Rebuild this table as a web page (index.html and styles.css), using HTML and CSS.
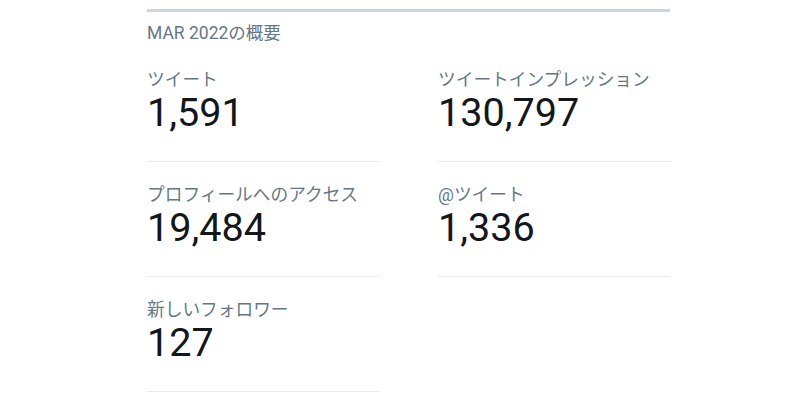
FILE: index.html
```html
<!DOCTYPE html>
<html lang="ja">
<head>
<meta charset="utf-8">
<title>Summary</title>
<link rel="stylesheet" href="styles.css">
</head>
<body>
<main class="summary">
  <div class="topbar"></div>
  <h2 class="period">MAR 2022の概要</h2>
  <div class="grid">
    <div class="stat">
      <div class="label">ツイート</div>
      <div class="value">1,591</div>
    </div>
    <div class="stat">
      <div class="label">ツイートインプレッション</div>
      <div class="value">130,797</div>
    </div>
    <div class="stat">
      <div class="label">プロフィールへのアクセス</div>
      <div class="value">19,484</div>
    </div>
    <div class="stat">
      <div class="label">@ツイート</div>
      <div class="value">1,336</div>
    </div>
    <div class="stat">
      <div class="label">新しいフォロワー</div>
      <div class="value">127</div>
    </div>
  </div>
</main>
</body>
</html>
```
FILE: styles.css
```css
html, body {
  margin: 0;
  padding: 0;
  background: #ffffff;
}
body {
  font-family: Roboto, "Noto Sans CJK JP", sans-serif;
  color: #14171a;
}
.summary {
  width: 523px;
  margin-left: 147px;
  padding-top: 9px;
}
.topbar {
  height: 3px;
  background: #ccd6dd;
}
.period {
  margin: 0;
  padding-top: 10px;
  height: 25px;
  font-size: 17.5px;
  line-height: 22px;
  font-weight: 400;
  color: #657786;
}
.grid {
  display: grid;
  grid-template-columns: 232px 232px;
  column-gap: 59px;
}
.stat {
  padding: 22px 0 26px;
  border-bottom: 1px solid #e6ecf0;
}
.label {
  font-size: 17.7px;
  line-height: 22px;
  color: #657786;
}
.value {
  font-size: 39.6px;
  line-height: 44px;
  color: #14171a;
}
```
